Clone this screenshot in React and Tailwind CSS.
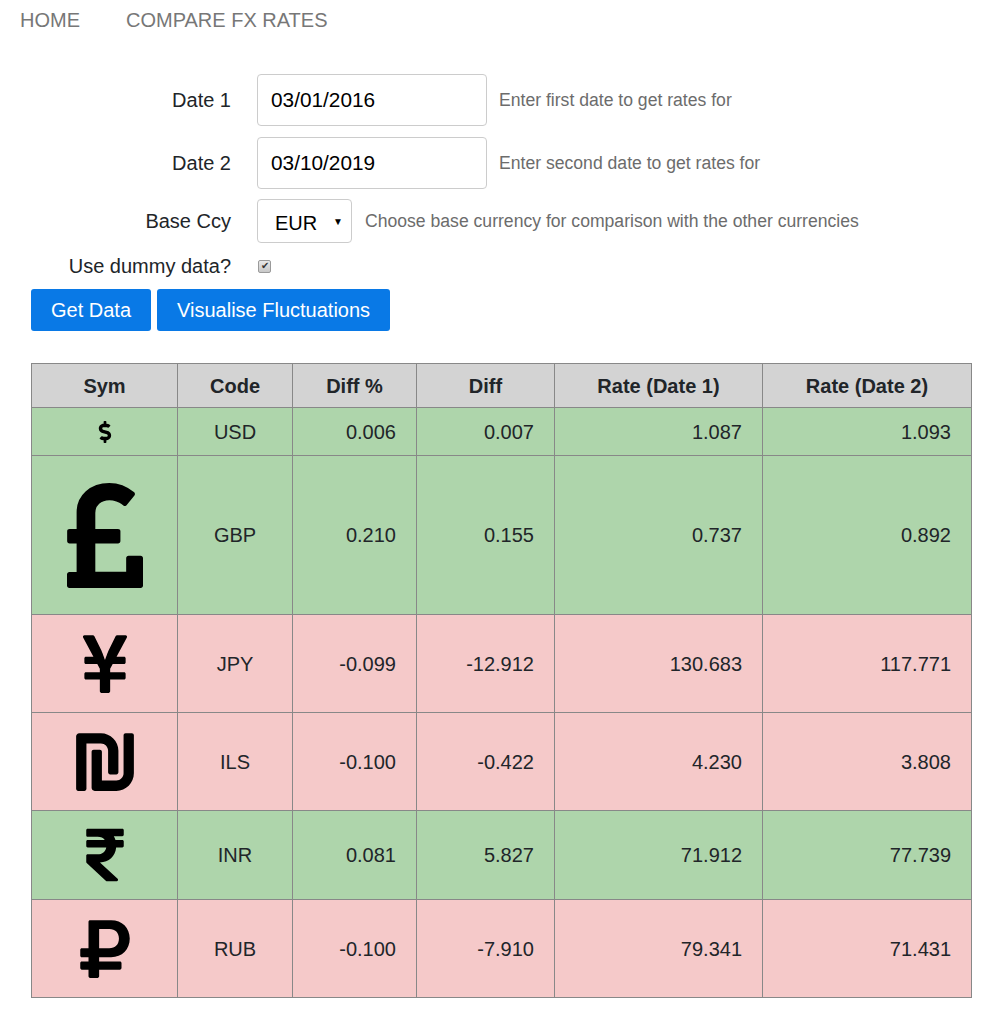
import React from "react";
import {
  FaDollarSign,
  FaYenSign,
  FaShekelSign,
  FaRupeeSign,
  FaRubleSign,
} from "react-icons/fa";

function Pound() {
  return (
    <svg width="76" height="105" viewBox="0 0 1020 1408" fill="currentColor">
      <path
        transform="translate(0,1408) scale(1,-1)"
        d="M1020 399v-367q0-14-9-23t-23-9h-956q-14 0-23 9t-9 23v150q0 13 9.5 22.5t22.5 9.5h97v383h-95q-14 0-23 9.5t-9 22.5v131q0 14 9 23t23 9h95v223q0 171 123.5 282t314.5 111q185 0 335-125q9-8 10-20.5t-7-22.5l-103-127q-9-11-22-12q-13-2-23 7q-5 5-26 19t-69 32-93 18q-85 0-137-47t-52-123v-215h305q13 0 22.5-9t9.5-23v-131q0-13-9.5-22.5t-22.5-9.5h-305v-379h414v181q0 13 9 22.5t23 9.5h162q14 0 23-9.5t9-22.5z"
      />
    </svg>
  );
}

const rows = [
  { Icon: FaDollarSign, size: "text-[22px]", code: "USD", dp: "0.006", d: "0.007", r1: "1.087", r2: "1.093", up: true, h: "h-[48px]" },
  { Icon: Pound, size: "text-[120px]", code: "GBP", dp: "0.210", d: "0.155", r1: "0.737", r2: "0.892", up: true, h: "h-[159px]" },
  { Icon: FaYenSign, size: "text-[66px]", code: "JPY", dp: "-0.099", d: "-12.912", r1: "130.683", r2: "117.771", up: false, h: "h-[98px]" },
  { Icon: FaShekelSign, size: "text-[66px]", code: "ILS", dp: "-0.100", d: "-0.422", r1: "4.230", r2: "3.808", up: false, h: "h-[98px]" },
  { Icon: FaRupeeSign, size: "text-[60px]", code: "INR", dp: "0.081", d: "5.827", r1: "71.912", r2: "77.739", up: true, h: "h-[89px]" },
  { Icon: FaRubleSign, size: "text-[66px]", code: "RUB", dp: "-0.100", d: "-7.910", r1: "79.341", r2: "71.431", up: false, h: "h-[98px]" },
];

export default function App() {
  return (
    <div className="font-['Liberation_Sans',Arial,sans-serif] text-[#212529] bg-white min-h-[1028px]">
      <nav className="flex items-center h-[40px] pl-[20px] text-[20px] text-[#777777]">
        <span>HOME</span>
        <span className="ml-[46px]">COMPARE FX RATES</span>
      </nav>

      <div className="pl-[31px] pt-[34px]">
        <div className="grid grid-cols-[200px_auto] gap-x-[26px] items-center">
          <label className="text-right text-[20px]">Date 1</label>
          <div className="flex items-center">
            <div className="w-[230px] h-[52px] border border-[#cccccc] rounded-[4px] flex items-center px-[13px] text-[20.8px] text-black">03/01/2016</div>
            <span className="ml-[12px] text-[17.6px] text-[#6c6c6c]">Enter first date to get rates for</span>
          </div>

          <label className="text-right text-[20px] mt-[11px]">Date 2</label>
          <div className="flex items-center mt-[11px]">
            <div className="w-[230px] h-[52px] border border-[#cccccc] rounded-[4px] flex items-center px-[13px] text-[20.8px] text-black">03/10/2019</div>
            <span className="ml-[12px] text-[17.6px] text-[#6c6c6c]">Enter second date to get rates for</span>
          </div>

          <label className="text-right text-[20px] mt-[10px]">Base Ccy</label>
          <div className="flex items-center mt-[10px]">
            <div className="w-[95px] h-[44px] border border-[#cccccc] rounded-[4px] flex items-center pl-[17px] pr-[8px] text-[20px] text-black">
              <span className="pt-[3px]">EUR</span>
              <span className="ml-auto text-[10px]">▼</span>
            </div>
            <span className="ml-[13px] text-[17.6px] text-[#6c6c6c]">Choose base currency for comparison with the other currencies</span>
          </div>

          <label className="text-right text-[20px] mt-[8px]">Use dummy data?</label>
          <div className="flex items-center mt-[8px]">
            <span className="ml-[1px] w-[13px] h-[13px] rounded-[2px] border border-[#9a9a9a] bg-gradient-to-b from-[#e8e8e8] to-[#c8c8c8] flex items-center justify-center text-[10px] leading-none text-[#333]">✔</span>
          </div>
        </div>

        <div className="flex gap-[6px] mt-[8px]">
          <button className="h-[42px] px-[20px] bg-[#0979e6] text-white text-[20px] rounded-[3px]">Get Data</button>
          <button className="h-[42px] px-[20px] bg-[#0979e6] text-white text-[20px] rounded-[3px]">Visualise Fluctuations</button>
        </div>

        <table className="mt-[32px] w-[940px] table-fixed border-collapse text-[20px]">
          <colgroup>
            <col className="w-[146px]" />
            <col className="w-[115px]" />
            <col className="w-[124px]" />
            <col className="w-[138px]" />
            <col className="w-[208px]" />
            <col className="w-[209px]" />
          </colgroup>
          <thead>
            <tr className="h-[44px] bg-[#d3d3d3]">
              {["Sym", "Code", "Diff %", "Diff", "Rate (Date 1)", "Rate (Date 2)"].map((h) => (
                <th key={h} className="border border-[#888888] font-bold text-center">{h}</th>
              ))}
            </tr>
          </thead>
          <tbody>
            {rows.map(({ Icon, size, code, dp, d, r1, r2, up, h }) => (
              <tr key={code} className={`${h} ${up ? "bg-[#aed5ab]" : "bg-[#f5c9c9]"}`}>
                <td className="border border-[#888888] text-center">
                  <div className={`flex justify-center items-center text-black ${size}`}>
                    <Icon />
                  </div>
                </td>
                <td className="border border-[#888888] text-center">{code}</td>
                <td className="border border-[#888888] text-right pr-[20px]">{dp}</td>
                <td className="border border-[#888888] text-right pr-[20px]">{d}</td>
                <td className="border border-[#888888] text-right pr-[20px]">{r1}</td>
                <td className="border border-[#888888] text-right pr-[20px]">{r2}</td>
              </tr>
            ))}
          </tbody>
        </table>
      </div>
    </div>
  );
}
